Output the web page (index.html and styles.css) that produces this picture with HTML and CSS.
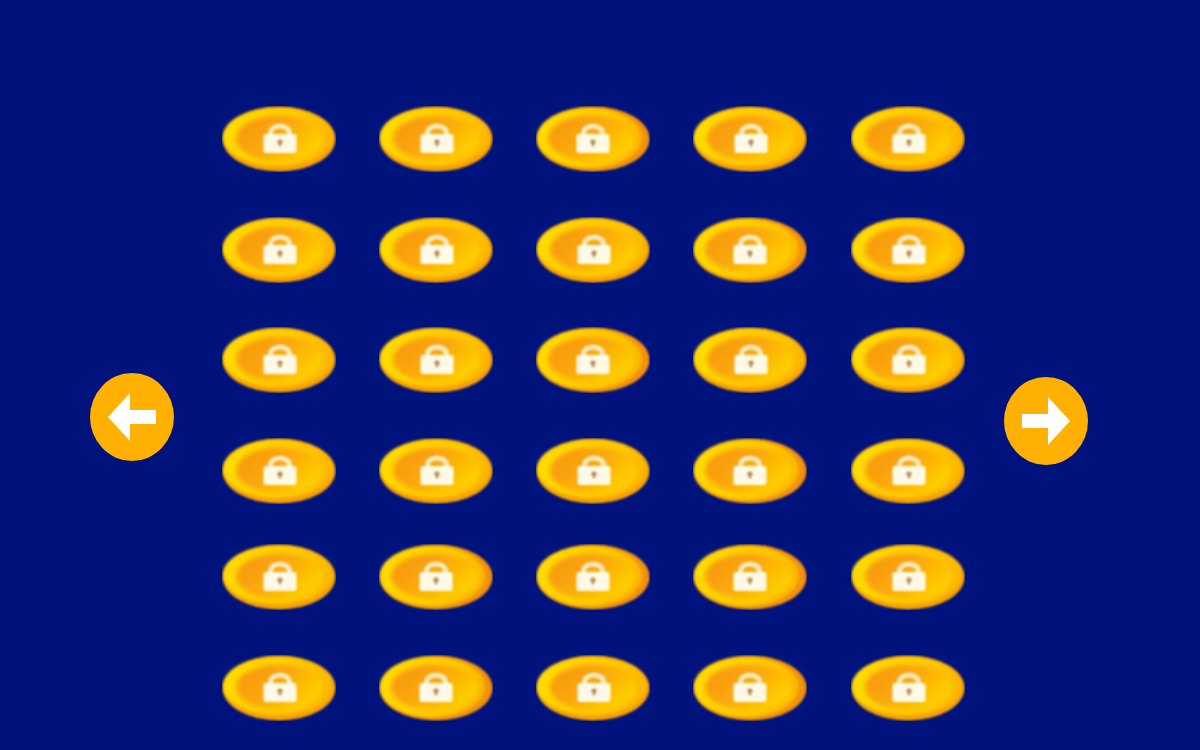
FILE: index.html
```html
<!DOCTYPE html>
<html lang="en">
<head>
    <meta charset="UTF-8">
    <title>Select Level</title>
    <link rel="stylesheet" href="styles.css">
</head>
<body>

<svg class="sprites" aria-hidden="true">
    <defs>
        <linearGradient id="rim" x1="0" y1="0.4" x2="1" y2="0.6">
            <stop offset="0" stop-color="#ffdc00"/>
            <stop offset="0.6" stop-color="#ffcc00"/>
            <stop offset="1" stop-color="#fcb400"/>
        </linearGradient>
        <linearGradient id="face" x1="0" y1="0.2" x2="1" y2="0.8">
            <stop offset="0" stop-color="#f7960a"/>
            <stop offset="0.45" stop-color="#fba908"/>
            <stop offset="1" stop-color="#ffd800"/>
        </linearGradient>
        <filter id="soft" x="-5%" y="-5%" width="110%" height="110%">
            <feTurbulence type="fractalNoise" baseFrequency="0.2" numOctaves="1" seed="4" result="noise"/>
            <feDisplacementMap in="SourceGraphic" in2="noise" scale="2" result="rough"/>
            <feGaussianBlur in="rough" stdDeviation="0.9"/>
        </filter>
        <filter id="blurRim" x="-10%" y="-10%" width="120%" height="120%">
            <feGaussianBlur stdDeviation="1.3"/>
        </filter>
        <filter id="blurFace" x="-10%" y="-10%" width="120%" height="120%">
            <feGaussianBlur stdDeviation="2"/>
        </filter>
        <filter id="blurLock" x="-20%" y="-20%" width="140%" height="140%">
            <feGaussianBlur stdDeviation="0.9"/>
        </filter>
        <g id="lock" filter="url(#blurLock)">
            <path d="M48.500 30v-3a9.500 7 0 0 1 19 0v3" fill="none" stroke="#f7e9bd" stroke-width="5"/>
            <rect x="41.500" y="28" width="33" height="19" rx="2.500" fill="#fff9e6"/>
            <circle cx="58" cy="36" r="2.800" fill="#b9924f"/>
            <rect x="56.800" y="36" width="2.400" height="4.500" fill="#b9924f"/>
        </g>
        <g id="coin" filter="url(#soft)">
            <ellipse cx="57" cy="33" rx="56.500" ry="32.500" fill="#f8a004"/>
            <ellipse cx="56" cy="31" rx="55" ry="29" fill="url(#rim)" filter="url(#blurRim)"/>
            <ellipse cx="57.500" cy="32.500" rx="43.500" ry="23" fill="url(#face)" filter="url(#blurFace)"/>
        </g>
        <g id="coinDark" filter="url(#soft)">
            <ellipse cx="57" cy="33" rx="56.500" ry="32.500" fill="#f29008"/>
            <ellipse cx="53.500" cy="32" rx="52.500" ry="30" fill="url(#rim)" filter="url(#blurRim)"/>
            <ellipse cx="55.500" cy="32.500" rx="43.500" ry="23" fill="url(#face)" filter="url(#blurFace)"/>
        </g>
    </defs>
</svg>

<div class="stage">
    <button class="arrow arrow-prev" aria-label="Previous">
        <svg viewBox="0 0 84 88"><path d="M18 44 40 20v17h26v14H40v17z"/></svg>
    </button>

    <div class="levels">
        <div class="coins">
            <svg class="coin" viewBox="0 0 114 66"><use href="#coin"/><use href="#lock"/></svg>
            <svg class="coin" viewBox="0 0 114 66"><use href="#coin"/><use href="#lock"/></svg>
            <svg class="coin" viewBox="0 0 114 66"><use href="#coinDark"/><use href="#lock" x="-1"/></svg>
            <svg class="coin" viewBox="0 0 114 66"><use href="#coin"/><use href="#lock"/></svg>
            <svg class="coin" viewBox="0 0 114 66"><use href="#coin"/><use href="#lock"/></svg>

            <svg class="coin" viewBox="0 0 114 66"><use href="#coin"/><use href="#lock"/></svg>
            <svg class="coin" viewBox="0 0 114 66"><use href="#coin"/><use href="#lock"/></svg>
            <svg class="coin" viewBox="0 0 114 66"><use href="#coin"/><use href="#lock"/></svg>
            <svg class="coin" viewBox="0 0 114 66"><use href="#coinDark"/><use href="#lock" x="-1"/></svg>
            <svg class="coin" viewBox="0 0 114 66"><use href="#coin"/><use href="#lock"/></svg>

            <svg class="coin" viewBox="0 0 114 66"><use href="#coin"/><use href="#lock"/></svg>
            <svg class="coin" viewBox="0 0 114 66"><use href="#coin"/><use href="#lock"/></svg>
            <svg class="coin" viewBox="0 0 114 66"><use href="#coinDark"/><use href="#lock" x="-1"/></svg>
            <svg class="coin" viewBox="0 0 114 66"><use href="#coin"/><use href="#lock"/></svg>
            <svg class="coin" viewBox="0 0 114 66"><use href="#coin"/><use href="#lock"/></svg>

            <svg class="coin" viewBox="0 0 114 66"><use href="#coin"/><use href="#lock"/></svg>
            <svg class="coin" viewBox="0 0 114 66"><use href="#coin"/><use href="#lock"/></svg>
            <svg class="coin" viewBox="0 0 114 66"><use href="#coin"/><use href="#lock"/></svg>
            <svg class="coin" viewBox="0 0 114 66"><use href="#coinDark"/><use href="#lock" x="-1"/></svg>
            <svg class="coin" viewBox="0 0 114 66"><use href="#coin"/><use href="#lock"/></svg>
        </div>

        <div class="coins">
            <svg class="coin" viewBox="0 0 114 66"><use href="#coin"/><use href="#lock"/></svg>
            <svg class="coin" viewBox="0 0 114 66"><use href="#coinDark"/><use href="#lock" x="-1"/></svg>
            <svg class="coin" viewBox="0 0 114 66"><use href="#coinDark"/><use href="#lock" x="-1"/></svg>
            <svg class="coin" viewBox="0 0 114 66"><use href="#coinDark"/><use href="#lock" x="-1"/></svg>
            <svg class="coin" viewBox="0 0 114 66"><use href="#coin"/><use href="#lock"/></svg>

            <svg class="coin" viewBox="0 0 114 66"><use href="#coin"/><use href="#lock"/></svg>
            <svg class="coin" viewBox="0 0 114 66"><use href="#coinDark"/><use href="#lock" x="-1"/></svg>
            <svg class="coin" viewBox="0 0 114 66"><use href="#coin"/><use href="#lock"/></svg>
            <svg class="coin" viewBox="0 0 114 66"><use href="#coinDark"/><use href="#lock" x="-1"/></svg>
            <svg class="coin" viewBox="0 0 114 66"><use href="#coin"/><use href="#lock"/></svg>
        </div>
    </div>

    <button class="arrow arrow-next" aria-label="Next">
        <svg viewBox="0 0 84 88"><path d="M66 44 44 20v17H18v14h26v17z"/></svg>
    </button>
</div>

</body>
</html>
```

FILE: styles.css
```css
body {
    margin: 0;
    height: 750px;
    overflow: hidden;
    background-color: #00137c;
    font-family: "Liberation Sans", sans-serif;
}
.sprites {
    position: absolute;
    width: 0;
    height: 0;
}
.stage {
    display: flex;
    align-items: flex-start;
    padding-left: 89.5px;
}
.arrow {
    width: 84px;
    height: 88px;
    padding: 0;
    border: none;
    border-radius: 50%;
    background-color: #ffb000;
    cursor: pointer;
}
.arrow svg {
    display: block;
    width: 100%;
    height: 100%;
    fill: white;
}
.arrow-prev {
    margin-top: 372.5px;
}
.arrow-next {
    margin-top: 376.5px;
}
.levels {
    display: flex;
    flex-direction: column;
    gap: 40.5px;
    margin: 106px 39px 0 48px;
}
.coins {
    display: grid;
    grid-template-columns: repeat(5, 114px);
    grid-auto-rows: 66px;
    column-gap: 43.25px;
    row-gap: 44.5px;
}
.coin {
    display: block;
    width: 114px;
    height: 66px;
}
```
